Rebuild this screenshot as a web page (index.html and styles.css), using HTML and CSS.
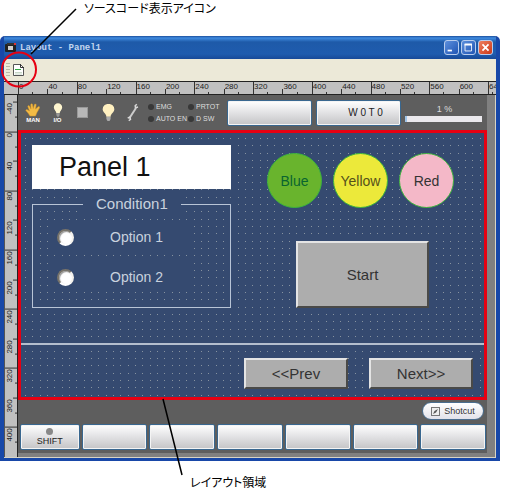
FILE: index.html
```html
<!DOCTYPE html>
<html lang="ja">
<head>
<meta charset="utf-8">
<title>Layout - Panel1</title>
<link rel="stylesheet" href="styles.css">
</head>
<body>
<div class="figure">
  <p class="caption caption-top">ソースコード表示アイコン</p>
  <main class="window">
    <header class="titlebar">
      <svg class="app-icon" viewBox="0 0 11 11"><rect y="2" width="11" height="8" rx="1" fill="#222"/><rect x="2" y="1" width="7" height="2" fill="#333"/><rect x="3" y="4" width="5" height="4" fill="#cfcfcf"/><rect x="9" y="1" width="2" height="2" fill="#d33"/></svg>
      <h1 class="title">Layout - Panel1</h1>
      <button class="win-btn" aria-label="Minimize"><svg viewBox="0 0 15 15"><rect x="3" y="10" width="5" height="2" fill="#fff"/></svg></button>
      <button class="win-btn" aria-label="Maximize"><svg viewBox="0 0 15 15"><path d="M3 4.5h8M3.5 4v7.500h7.500V4" fill="none" stroke="#fff"/><path d="M3 4h8.500" stroke="#fff" stroke-width="2"/></svg></button>
      <button class="win-btn close" aria-label="Close"><svg viewBox="0 0 15 15"><path d="M4 4l7 7M11 4l-7 7" stroke="#fff" stroke-width="2"/></svg></button>
    </header>
    <div class="toolbar">
      <span class="grip"></span>
      <button class="source-btn" aria-label="ソースコード表示"><svg viewBox="0 0 11 12"><path d="M.5 .5h7l3 3v8H.5z" fill="#fff" stroke="#555"/><path d="M7.500 0v3.500H11" fill="none" stroke="#333"/><path d="M2 5.500h6" stroke="#3a4"/><path d="M2 8.500h7M2 10h7" stroke="#c8d8c8"/></svg></button>
    </div>
    <div class="ruler-x">
      <span>0</span><span>40</span><span>80</span><span>120</span><span>160</span><span>200</span><span>240</span><span>280</span><span>320</span><span>360</span><span>400</span><span>440</span><span>480</span><span>520</span><span>560</span><span>600</span><span class="tail">640</span>
    </div>
    <div class="workspace">
      <div class="ruler-y">
        <span class="lead"></span><span>-40</span><span>0</span><span>40</span><span>80</span><span>120</span><span>160</span><span>200</span><span>240</span><span>280</span><span>320</span><span>360</span><span>400</span>
      </div>
      <div class="pendant">
        <div class="status">
          <div class="icon-cell"><svg class="hand" viewBox="0 0 16 14"><path d="M5 13L3 10 .8 7.500Q1 6 3 7l1.500 1L2.800 3.500Q3 2 4.500 3L6 6 5.700 1.500Q6.500 0 7.500 1.200L8.200 5.500 9.500 1.300Q10.800.3 11.200 1.800L10.500 6 13.500 3.500Q15 3.300 14.500 5L12 9.500 10.500 13z" fill="#f3bb45" stroke="#d29428" stroke-width=".5"/></svg><span>MAN</span></div>
          <div class="icon-cell"><svg class="bulb-s" viewBox="0 0 12 16"><path d="M6 0a5 5 0 0 1 5 5c0 3-3 4-3 7H4C4 9 1 8 1 5a5 5 0 0 1 5-5z" fill="#fff6cf"/><path d="M4 12h4v2l-1 2H5l-1-2z" fill="#999"/></svg><span>I/O</span></div>
          <div class="icon-cell"><i class="stop"></i></div>
          <div class="icon-cell"><svg class="bulb-l" viewBox="0 0 12 16"><path d="M6 0a5 5 0 0 1 5.500 5c0 3-3.500 4-3.500 7H4C4 9 .5 8 .5 5A5 5 0 0 1 6 0z" fill="#fff0c0"/><path d="M4 12h4v2l-1 2H5l-1-2z" fill="#aaa"/></svg></div>
          <div class="icon-cell"><svg class="wrench" viewBox="0 0 12 18"><path d="M2.500 14.500L9 4.500" stroke="#ccc" stroke-width="2"/><path d="M9.800.8L8.200 2.300 8.500 4.300 11 3.500M.7 14.500L2.800 13.700 3.500 15.700 1.800 17.200" fill="none" stroke="#d8d8d8" stroke-width="1.500"/></svg></div>
          <ul class="leds"><li>EMG</li><li>PRTOT</li><li>AUTO EN</li><li>D SW</li></ul>
          <button class="key" aria-label="Message"></button>
          <button class="key mode">W 0 T 0</button>
          <div class="speed"><label for="speed">1 %</label><progress id="speed" max="100" value="2"></progress></div>
        </div>
        <section class="panel">
          <svg class="dots" width="100%" height="100%"><defs><pattern id="grid" width="22" height="22" patternUnits="userSpaceOnUse"><path d="M4 5h1M11 5h1M19 5h1M4 12h1M11 12h1M19 12h1M4 20h1M11 20h1M19 20h1" stroke="#8793a0" transform="translate(0 .5)"/></pattern></defs><rect width="100%" height="100%" fill="url(#grid)"/></svg>
          <div class="panel-top">
            <div class="left">
              <h2 class="name">Panel 1</h2>
              <fieldset class="group">
                <legend>Condition1</legend>
                <label class="option"><input type="radio" name="c">Option 1</label>
                <label class="option"><input type="radio" name="c">Option 2</label>
              </fieldset>
            </div>
            <div class="right">
              <div class="lamps"><button class="lamp blue">Blue</button><button class="lamp yellow">Yellow</button><button class="lamp red">Red</button></div>
              <button class="btn start">Start</button>
            </div>
          </div>
          <nav class="pager"><button class="btn">&lt;&lt;Prev</button><button class="btn">Next&gt;&gt;</button></nav>
        </section>
        <div class="shortcut-row"><button class="shortcut"><svg viewBox="0 0 9 9"><rect x=".5" y=".5" width="8" height="8" fill="#eee" stroke="#777"/><path d="M2 7l1.500-3L7 2 5 5.500z" fill="#555"/></svg>Shotcut</button></div>
        <div class="keys"><button class="key shift"><i></i>SHIFT</button><button class="key" aria-label="F1"></button><button class="key" aria-label="F2"></button><button class="key" aria-label="F3"></button><button class="key" aria-label="F4"></button><button class="key" aria-label="F5"></button><button class="key" aria-label="F6"></button></div>
      </div>
    </div>
  </main>
  <p class="caption caption-bottom">レイアウト領域</p>
  <svg class="callouts" width="506" height="489"><circle cx="19" cy="69.500" r="17" fill="none" stroke="#e60012" stroke-width="2"/><path d="M76 9L31 54M163 399L182 475" stroke="#000" stroke-width="1.500"/></svg>
</div>
</body>
</html>
```

FILE: styles.css
```css
* { box-sizing: border-box; }
body { margin: 0; background: #fff; font-family: "Liberation Sans", "Noto Sans CJK JP", sans-serif; }
button { font-family: inherit; padding: 0; margin: 0; }
svg { display: block; }
.figure { position: relative; padding-right: 6px; }
.callouts { position: absolute; left: 0; top: 0; pointer-events: none; }
.caption { margin: 0; font: 12px/14px "Noto Sans CJK JP", sans-serif; font-feature-settings: "palt"; color: #000; }
.caption-top { padding: 1px 0 21px 84px; }
.caption-bottom { padding: 14px 0 0 190px; }

.window { border: solid #1848a8; border-width: 0 4px 3px; border-radius: 5px 5px 0 0; background: #808080; overflow: hidden; }
.titlebar { display: flex; align-items: center; gap: 2px; height: 23px; margin: 0 -4px; padding: 0 7px 0 5px; background: linear-gradient(#1c4f9c, #3f8be0 2px, #1e5aa8 6px, #1f5cae 18px, #184a98); }
.app-icon { width: 11px; height: 11px; }
.title { flex: 1; margin: 0 0 0 2px; font: bold 9px/12px "Liberation Mono", monospace; color: #c3d5ee; }
.win-btn { width: 15px; height: 15px; border: 1px solid #b8cdee; border-radius: 3px; background: linear-gradient(135deg, #5c8fdc, #1f55b4); }
.win-btn svg { width: 13px; height: 13px; }
.win-btn.close { background: linear-gradient(135deg, #ee8060, #cc3818); }

.toolbar { display: flex; align-items: center; gap: 5px; height: 22px; padding: 0 2px; background: #ece9d8; }
.grip { width: 4px; height: 14px; background: repeating-linear-gradient(#bbb8a8 0 1px, transparent 1px 3px); }
.source-btn { border: 0; background: none; margin-left: -2px; }
.source-btn svg { width: 11px; height: 12px; }

.ruler-x { display: grid; grid-template-columns: repeat(16, 1fr) 8px; height: 14px; padding-left: 14px; border: solid #222; border-width: 1px 0; background: #c0c0c0; overflow: hidden; }
.ruler-x span { position: relative; padding-left: 1px; font-size: 8px; line-height: 9px; color: #222; white-space: nowrap; background: linear-gradient(#333, #333) 0 100% / 1px 5px no-repeat, linear-gradient(#333, #333) 50% 100% / 1px 2px no-repeat; }
.ruler-x span:nth-child(odd) { background-size: 1px 100%, 1px 2px; }
.ruler-x .tail { overflow: hidden; }

.workspace { display: grid; grid-template-columns: 14px 1fr; padding-right: 8px; border-bottom: 1px solid #d8d4c4; border-right: 1px solid #d8d4c4; }
.ruler-y { display: grid; grid-template-rows: 7px repeat(12, 1fr); border-left: 1px solid #555; border-right: 1px solid #222; background: #c0c0c0; overflow: hidden; }
.ruler-y span { writing-mode: vertical-rl; transform: rotate(180deg); display: flex; justify-content: flex-end; padding-bottom: 1px; min-height: 0; font-size: 8px; line-height: 10px; color: #222; background: linear-gradient(#333, #333) 0 100% / 4px 1px no-repeat, linear-gradient(#333, #333) 0 50% / 2px 1px no-repeat; }
.ruler-y span:nth-child(odd) { background-size: 100% 1px, 2px 1px; }
.ruler-y .lead { background: none; }

.pendant { background: #5e5e5e; border-bottom: 4px solid #808080; min-width: 0; }
.status { display: grid; grid-template-columns: 24px 25px 24px 28px 21px 84px 85px 89px 1fr; align-items: center; height: 35px; padding: 0 3px; }
.status .key + .key { margin-left: 4px; }
.icon-cell { display: flex; flex-direction: column; align-items: center; color: #fff; font-size: 6px; line-height: 6px; font-weight: bold; }
.hand { width: 16px; height: 14px; }
.bulb-s { width: 10px; height: 14px; }
.bulb-l { width: 13px; height: 17px; }
.wrench { width: 12px; height: 19px; }
.stop { width: 11px; height: 11px; background: #b8b8b8; border: 1px solid #999; }
.leds { display: grid; grid-template-columns: 40px 1fr; row-gap: 3px; margin: 0; padding: 0 0 0 5px; list-style: none; color: #ddd; font-size: 7px; line-height: 9px; white-space: nowrap; }
.leds li { display: flex; align-items: center; gap: 2px; }
.leds li::before { content: ""; flex: none; width: 6px; height: 6px; border-radius: 50%; background: #383838; }
.key { height: 26px; border: 1px solid #39678f; border-radius: 2px; background: linear-gradient(#fff, #e4e4e6 45%, #c4c4c6); box-shadow: inset 0 0 0 1px #f4f4f4; color: #222; }
.mode { font-size: 10px; padding-left: 14px; }
.speed { display: flex; flex-direction: column; align-items: center; gap: 1px; padding: 0 2px 0 4px; color: #ddd; font-size: 9px; line-height: 11px; }
.speed label { padding-left: 2px; }
.speed progress { appearance: none; width: 100%; height: 6px; border: 0; background: #ebe9ed; }
.speed progress::-webkit-progress-bar { background: #ebe9ed; }
.speed progress::-webkit-progress-value { background: #9fc4e8; }

.panel { position: relative; border: 3px solid #e60012; background: #354a70; color: #c9d2de; }
.dots { position: absolute; left: 0; top: 0; }
.panel-top { position: relative; display: grid; grid-template-columns: 199fr 187fr; gap: 36px; padding: 12px 30px 35px 11px; }
.name { margin: 0; height: 44px; padding-left: 27px; background: #fff; color: #111; font-weight: normal; font-size: 27px; line-height: 44px; }
.group { min-width: 0; margin: 7px 0 0; padding: 11px 0 6px 18px; height: 112px; border: 1px solid #b8c4d6; }
.group legend { margin: 0 0 0 32px; padding: 0 13px; background: #354a70; font-size: 15px; line-height: 16px; }
.option { display: flex; align-items: center; gap: 36px; width: 140px; height: 28px; margin-bottom: 12px; padding-left: 6px; background: #354a70; font-size: 14px; }
.option:last-child { margin-bottom: 0; }
.option input { appearance: none; flex: none; width: 17px; height: 17px; margin: 0; border: 2px solid; border-color: #77736a #f4f2ec #fff #77736a; border-radius: 50%; background: #fff; box-shadow: inset 1px 1px 1px #999; }
.right { padding-top: 8px; }
.lamps { display: flex; gap: 11px; }
.lamp { width: 55px; height: 55px; border: 1px solid #3cb43c; border-radius: 50%; font-size: 14px; color: #333; }
.blue { background: #69b42d; color: #0a6430; }
.yellow { background: #ece93a; color: #55501a; }
.lamp.red { background: #f4b8c8; }
.btn { width: 104px; height: 31px; border: 2px solid; border-color: #e4e4e4 #4a4a48 #4a4a48 #e4e4e4; background: #adadad; color: #333; font-size: 15px; }
.start { display: block; width: 133px; height: 67px; margin: 33px 0 0 29px; }
.pager { position: relative; display: flex; justify-content: flex-end; gap: 21px; padding: 13px 11px 8px; border-top: 2px solid #b4bece; }

.shortcut-row { display: flex; justify-content: flex-end; padding: 2px 3px 4px; }
.shortcut { display: flex; align-items: center; justify-content: center; gap: 4px; width: 62px; height: 18px; border: 1px solid #4a6e90; border-radius: 9px; background: linear-gradient(#fff, #e2e2ea); color: #333; font-size: 9px; }
.shortcut svg { width: 9px; height: 9px; }
.keys { display: grid; grid-template-columns: 60fr repeat(6, 66fr); gap: 2px; padding: 0 1px 3px 2px; }
.shift { display: flex; flex-direction: column; align-items: center; justify-content: center; gap: 1px; font-size: 9px; line-height: 10px; }
.shift i { width: 7px; height: 7px; border-radius: 50%; background: #888; }
```
